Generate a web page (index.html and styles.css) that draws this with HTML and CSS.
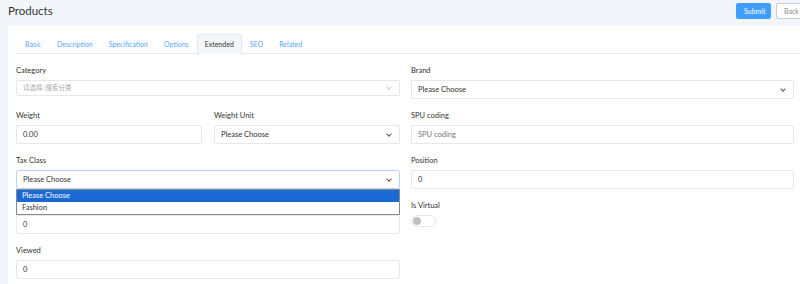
FILE: index.html
```html
<!DOCTYPE html>
<html lang="en">
<head>
  <meta charset="UTF-8">
  <title>Products</title>
  <link rel="stylesheet" href="styles.css">
</head>
<body>
  <div class="page">
    <div class="page-header">
      <h1>Products</h1>
      <div class="actions">
        <button class="btn btn-primary">Submit</button>
        <button class="btn btn-default">Back</button>
      </div>
    </div>

    <div class="card">
      <ul class="tabs">
        <li>Basic</li>
        <li>Description</li>
        <li>Specification</li>
        <li>Options</li>
        <li class="active">Extended</li>
        <li>SEO</li>
        <li>Related</li>
      </ul>

      <div class="form">
        <div class="col">
          <div class="field field-small">
            <label>Category</label>
            <div class="control select small placeholder-cn">请选择/搜索分类<span class="caret light"></span></div>
          </div>
          <div class="pair">
            <div class="field">
              <label>Weight</label>
              <div class="control">0.00</div>
            </div>
            <div class="field">
              <label>Weight Unit</label>
              <div class="control select">Please Choose<span class="caret"></span></div>
            </div>
          </div>
          <div class="field dropdown-wrap">
            <label>Tax Class</label>
            <div class="control select focus">Please Choose<span class="caret"></span></div>
            <ul class="dropdown">
              <li class="selected">Please Choose</li>
              <li>Fashion</li>
            </ul>
          </div>
          <div class="field">
            <label class="covered">Stock</label>
            <div class="control">0</div>
          </div>
          <div class="field">
            <label>Viewed</label>
            <div class="control">0</div>
          </div>
        </div>

        <div class="col">
          <div class="field">
            <label>Brand</label>
            <div class="control select">Please Choose<span class="caret"></span></div>
          </div>
          <div class="field">
            <label>SPU coding</label>
            <div class="control placeholder">SPU coding</div>
          </div>
          <div class="field">
            <label>Position</label>
            <div class="control">0</div>
          </div>
          <div class="field">
            <label>Is Virtual</label>
            <div class="switch"><span class="knob"></span></div>
          </div>
        </div>
      </div>
    </div>
  </div>
</body>
</html>
```

FILE: styles.css
```css
body {
  margin: 0;
  font-family: Lato, "Noto Sans CJK SC", sans-serif;
  background: #f2f6fb;
  color: #333;
  overflow: hidden;
}
.page {
  width: 810px;
}
.page-header {
  height: 26px;
  display: flex;
  align-items: flex-start;
  justify-content: space-between;
  padding-left: 8px;
}
.page-header h1 {
  margin: 0;
  font-size: 11.5px;
  font-weight: normal;
  line-height: 22px;
  color: #333;
}
.actions {
  display: flex;
  gap: 5px;
  padding-top: 3px;
}
.btn {
  font-family: inherit;
  font-size: 7px;
  height: 16px;
  padding: 0 7px;
  border-radius: 2px;
  cursor: pointer;
}
.btn-primary {
  background: #409eff;
  border: 1px solid #409eff;
  color: #fff;
  width: 35px;
}
.btn-default {
  background: #fff;
  border: 1px solid #c9ccd1;
  color: #888;
  width: 34px;
  text-align: left;
}
.card {
  background: #fff;
  margin-left: 8px;
  padding: 8px 8px 20px;
}
.tabs {
  list-style: none;
  margin: 0;
  padding: 0;
  display: flex;
  border-bottom: 1px solid #e4e7ed;
  height: 19px;
}
.tabs li {
  font-size: 7px;
  line-height: 19px;
  padding: 0 7px;
  color: #5aa6f5;
  border: 1px solid transparent;
  border-bottom: none;
}
.tabs li:first-child {
  padding-left: 8px;
}
.tabs li.active {
  color: #333;
  background: #f4f7fa;
  border-color: #e4e7ed;
  border-radius: 2px 2px 0 0;
  height: 19px;
  margin-bottom: -1px;
  padding: 0 7px;
}
.form {
  display: grid;
  grid-template-columns: 384px 383px;
  gap: 0 11px;
  padding-top: 11px;
}
.pair {
  display: grid;
  grid-template-columns: 186px 186px;
  gap: 12px;
}
.field {
  margin-bottom: 11px;
}
.field-small {
  margin-bottom: 14px;
}
.field label {
  display: block;
  font-size: 7.5px;
  line-height: 12px;
  margin-bottom: 3px;
  color: #333;
}
.field label.covered {
  visibility: hidden;
}
.control {
  box-sizing: border-box;
  height: 19px;
  border: 1px solid #e6e8eb;
  border-radius: 2px;
  font-size: 7.5px;
  line-height: 17px;
  padding: 0 6px;
  color: #333;
  position: relative;
}
.control.small {
  height: 16px;
  line-height: 14px;
}
.control.focus {
  border-color: #b8d4f7;
}
.placeholder {
  color: #777;
}
.placeholder-cn {
  color: #aaa;
  font-size: 6.5px;
}
.caret {
  position: absolute;
  right: 8px;
  top: 50%;
  width: 3px;
  height: 3px;
  margin-top: -3px;
  border-right: 1px solid #555;
  border-bottom: 1px solid #555;
  transform: rotate(45deg);
}
.caret.light {
  border-color: #ccc;
}
.dropdown-wrap {
  position: relative;
}
.dropdown {
  position: absolute;
  left: 0;
  right: 0;
  top: 34px;
  margin: 0;
  padding: 0;
  list-style: none;
  background: #fff;
  border: 1px solid #8a8a8a;
  z-index: 2;
}
.dropdown li {
  font-size: 7.5px;
  line-height: 12px;
  padding: 0 5px;
  color: #333;
}
.dropdown li.selected {
  background: #1a69d4;
  color: #fff;
}
.switch {
  width: 25px;
  height: 12px;
  box-sizing: border-box;
  border: 1px solid #e4e7ed;
  border-radius: 7px;
  background: #fff;
  margin-top: 2px;
  position: relative;
}
.knob {
  position: absolute;
  left: 1px;
  top: 1px;
  width: 8px;
  height: 8px;
  border-radius: 50%;
  background: #bfbfbf;
}
```
